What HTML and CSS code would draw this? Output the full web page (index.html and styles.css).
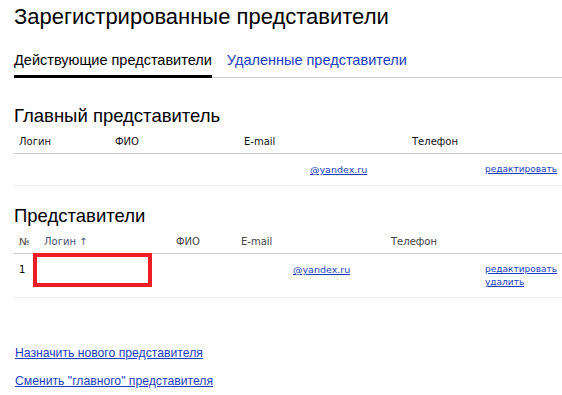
FILE: index.html
```html
<!DOCTYPE html>
<html>
<head>
    <meta charset="utf-8">
    <link rel="stylesheet" href="styles.css">
</head>
<body>
    <div class="page">
        <h1 class="title">Зарегистрированные представители</h1>

        <div class="tabs">
            <span class="tab tab-active">Действующие представители</span>
            <a class="tab" href="#">Удаленные представители</a>
        </div>

        <h2 class="section">Главный представитель</h2>
        <div class="grid grid-main">
            <div class="row head">
                <span>Логин</span>
                <span>ФИО</span>
                <span>E-mail</span>
                <span>Телефон</span>
                <span></span>
            </div>
            <div class="row item">
                <span></span>
                <span></span>
                <span><a class="mail" href="#">@yandex.ru</a></span>
                <span></span>
                <span class="actions actions-right"><a href="#">редактировать</a></span>
            </div>
        </div>

        <h2 class="section section-list">Представители</h2>
        <div class="grid grid-list">
            <div class="row head">
                <span>№</span>
                <span class="sort">Логин ↑</span>
                <span>ФИО</span>
                <span>E-mail</span>
                <span>Телефон</span>
                <span></span>
            </div>
            <div class="row item">
                <span>1</span>
                <span class="login"><span class="redact"></span></span>
                <span></span>
                <span><a class="mail" href="#">@yandex.ru</a></span>
                <span></span>
                <span class="actions">
                    <a href="#">редактировать</a>
                    <a href="#">удалить</a>
                </span>
            </div>
        </div>

        <div class="links">
            <a href="#">Назначить нового представителя</a>
            <a href="#">Сменить "главного" представителя</a>
        </div>
    </div>
</body>
</html>
```

FILE: styles.css
```css
body {
    margin: 0;
    background: #fff;
    font-family: "Liberation Sans", Arial, sans-serif;
    color: #000;
}

.page {
    padding: 0 0 0 14px;
}

.title {
    margin: 0;
    padding-top: 4px;
    font-size: 22px;
    font-weight: normal;
    line-height: 26px;
}

.tabs {
    display: flex;
    gap: 15px;
    margin-top: 21px;
    border-bottom: 1px solid #ccc;
    font-size: 14.5px;
    line-height: 18px;
}

.tab {
    padding-bottom: 6px;
    color: #1a3dc1;
    text-decoration: none;
}

.tab-active {
    color: #000;
    border-bottom: 3px solid #000;
    margin-bottom: -1px;
}

.section {
    margin: 27px 0 0;
    font-size: 18.5px;
    font-weight: normal;
    line-height: 22px;
}

.section-list {
    margin-top: 19px;
}

.grid {
    font-family: "DejaVu Sans", Verdana, sans-serif;
    font-size: 10px;
}

.row {
    display: grid;
}

.grid-main .row {
    grid-template-columns: 96px 129px 168px 73px 1fr;
}

.grid-list .row {
    grid-template-columns: 25px 132px 65px 150px 94px 1fr;
}

.row span {
    padding-left: 5px;
}

.head {
    height: 27px;
    line-height: 14px;
    padding-top: 8px;
    box-sizing: border-box;
    border-bottom: 1px solid #ccc;
    color: #111;
}

.grid-list .head {
    color: #444;
}

.sort {
    color: #4a5575;
}

.item {
    height: 32px;
    padding-top: 9px;
    box-sizing: border-box;
    border-bottom: 1px solid #eee;
    line-height: 13px;
}

.grid-list .item {
    height: 44px;
}

.item a {
    color: #1a3dc1;
}

.mail {
    margin-left: 66px;
    font-size: 9.5px;
}

.grid-list .mail {
    margin-left: 52px;
}

.actions {
    display: flex;
    flex-direction: column;
    font-size: 9px;
}

.actions-right {
    align-items: flex-end;
    padding-right: 6px;
}

.login {
    position: relative;
}

.redact {
    position: absolute;
    left: -6px;
    top: -10px;
    width: 106px;
    height: 26px;
    border: 4px solid #ee1c25;
}

.links {
    display: flex;
    flex-direction: column;
    gap: 13px;
    margin-top: 48px;
    padding-left: 1px;
    font-size: 12.2px;
    line-height: 15px;
}

.links a {
    color: #1a3dc1;
    align-self: flex-start;
}
```
